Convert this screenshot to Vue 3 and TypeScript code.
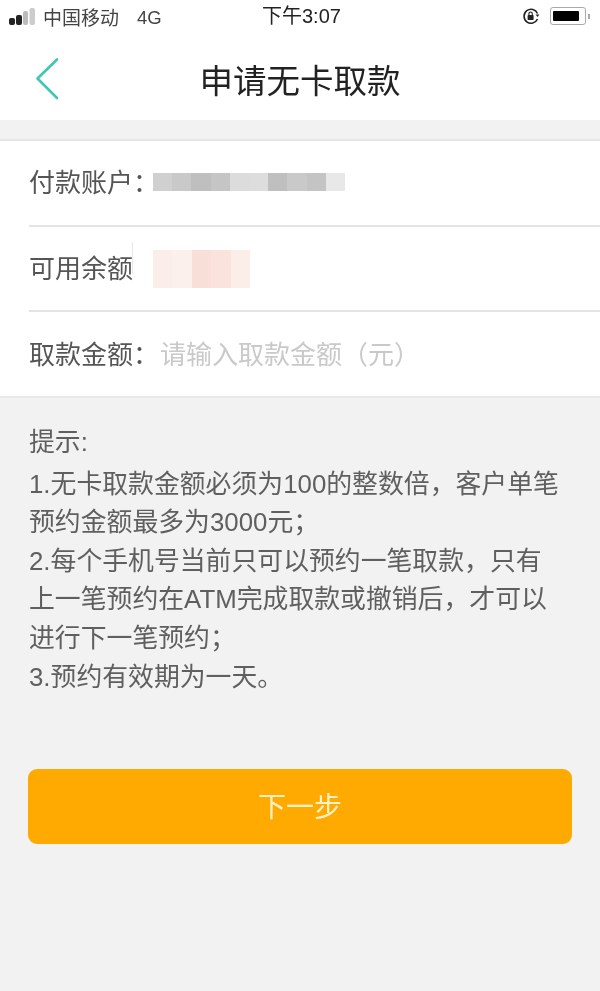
<script setup lang="ts">
const notes: string[] = [
  '1.无卡取款金额必须为100的整数倍，客户单笔',
  '预约金额最多为3000元；',
  '2.每个手机号当前只可以预约一笔取款，只有',
  '上一笔预约在ATM完成取款或撤销后，才可以',
  '进行下一笔预约；',
  '3.预约有效期为一天。',
]
const accountBlur = ['#d0d0d0', '#c9c9c9', '#bfbfbf', '#c5c5c5', '#dcdcdc', '#dddddd', '#bfbfbf', '#c9c9c9', '#c4c4c4', '#e8e8e8']
const balanceBlur = ['#fbeeea', '#fbf0ec', '#f8dfd7', '#f9e3dc', '#fbeee9']
</script>

<template>
  <div class="page">
    <div class="status">
      <div class="status-left">
        <svg class="signal" width="27" height="17" viewBox="0 0 27 17">
          <rect x="0" y="10" width="6" height="7" rx="2" fill="#222" />
          <rect x="7" y="7" width="6" height="10" rx="2" fill="#222" />
          <rect x="14" y="3" width="5" height="14" rx="2" fill="#bbb" />
          <rect x="20.5" y="0" width="5.5" height="17" rx="2" fill="#ccc" />
        </svg>
        <span class="carrier">中国移动</span>
        <span class="net">4G</span>
      </div>
      <div class="clock">下午3:07</div>
      <div class="status-right">
        <svg width="18" height="18" viewBox="0 0 18 18" fill="none">
          <path d="M15.5 6.5A7 7 0 1 0 15.5 12" stroke="#222" stroke-width="1.6" />
          <path d="M13.6 7.6h3.8L15.5 10z" fill="#222" />
          <rect x="5.6" y="8" width="6" height="5" rx="0.8" fill="#222" />
          <path d="M6.9 8V6.7a1.7 1.7 0 0 1 3.4 0V8" stroke="#222" stroke-width="1.1" />
        </svg>
        <div class="battery"><div class="battery-fill"></div></div>
        <div class="battery-cap"></div>
      </div>
    </div>

    <header class="nav">
      <svg class="back" width="26" height="44" viewBox="0 0 26 44" fill="none">
        <path d="M23 2.5 3.5 21.5 23 41" stroke="#3fc6b5" stroke-width="2.6" stroke-linecap="round" stroke-linejoin="round" />
      </svg>
      <h1 class="title">申请无卡取款</h1>
    </header>

    <section class="form">
      <div class="row">
        <span class="label">付款账户：</span>
        <div class="blur account"><i v-for="(c, i) in accountBlur" :key="i" :style="{ background: c }"></i></div>
      </div>
      <div class="row">
        <span class="label edged">可用余额</span>
        <div class="blur balance"><i v-for="(c, i) in balanceBlur" :key="i" :style="{ background: c }"></i></div>
      </div>
      <div class="row">
        <span class="label">取款金额：</span>
        <span class="placeholder">请输入取款金额（元）</span>
      </div>
    </section>

    <section class="tips">
      <p class="tips-head">提示:</p>
      <p v-for="line in notes" :key="line">{{ line }}</p>
    </section>

    <button class="next" type="button">下一步</button>
  </div>
</template>

<style>
html, body { margin: 0; background: #f2f2f2; }
</style>

<style scoped>
.page {
  width: 600px;
  height: 991px;
  overflow: hidden;
  background: #f2f2f2;
  font-family: "Liberation Sans", "Noto Sans CJK SC", sans-serif;
  display: flex;
  flex-direction: column;
  filter: blur(0.35px);
}
.status {
  height: 35px;
  background: #fff;
  padding: 0 10px 0 9px;
  display: flex;
  align-items: center;
  position: relative;
  color: #333;
}
.status-left { display: flex; align-items: center; }
.signal { margin: 0 7px 3px 0; }
.carrier { font-size: 19px; color: #444; margin-bottom: 3px; }
.net { margin-left: 18px; font-size: 18.5px; color: #444; }
.clock {
  position: absolute;
  left: 262px;
  top: 4px;
  font-size: 20px;
  line-height: 24px;
  color: #222;
}
.status-right { margin-left: auto; display: flex; align-items: center; margin-bottom: 3px; }
.status-right svg { margin-right: 10px; }
.battery {
  width: 36px;
  height: 18px;
  box-sizing: border-box;
  border: 1px solid #aaa;
  border-radius: 3px;
  padding: 3px 2px;
}
.battery-fill { width: 26px; height: 100%; background: #000; border-radius: 1px; }
.battery-cap { width: 2px; height: 5px; margin-left: 2px; background: #aaa; }
.nav {
  height: 85px;
  background: #fff;
  display: flex;
  align-items: center;
  justify-content: center;
  position: relative;
}
.back { position: absolute; left: 34px; top: 22px; }
.title {
  margin: 1px 0 0;
  font-size: 33.5px;
  font-weight: 400;
  color: #222;
}
.form {
  margin-top: 19px;
  background: #fff;
  border-top: 2px solid #e6e6e6;
  border-bottom: 2px solid #e9e9e9;
  height: 259px;
  box-sizing: border-box;
  padding-left: 29px;
}
.row {
  height: 86px;
  box-sizing: border-box;
  border-bottom: 2px solid #e4e4e4;
  display: flex;
  align-items: center;
  font-size: 26px;
  color: #555;
}
.row:nth-child(2) { height: 85px; }
.row:last-child { border-bottom: 0; }
.label { width: 125px; flex: none; white-space: nowrap; margin-bottom: 5px; position: relative; }
.edged::after {
  content: "";
  position: absolute;
  left: 103px;
  top: -6px;
  width: 1px;
  height: 32px;
  background: #e8e8e8;
}
.blur { display: flex; margin-left: -1px; }
.blur i { display: block; height: 100%; flex: 1; }
.blur.account { width: 192px; height: 18px; margin-top: -2px; }
.blur.balance { width: 97px; height: 38px; }
.placeholder { margin: 0 0 5px 6px; color: #c9c9c9; white-space: nowrap; }
.tips {
  padding: 25px 29px 0;
  font-size: 25.85px;
  line-height: 38.6px;
  color: #5f5f5f;
}
.tips p { margin: 0; white-space: nowrap; }
.tips .tips-head { margin-bottom: 3px; }
.next {
  display: block;
  flex: none;
  margin: 73px 28px 0;
  width: 544px;
  height: 75px;
  border: 0;
  border-radius: 9px;
  background: #ffaa00;
  color: #fff2c8;
  font: inherit;
  font-size: 28px;
  padding: 0 0 3px;
}
</style>
